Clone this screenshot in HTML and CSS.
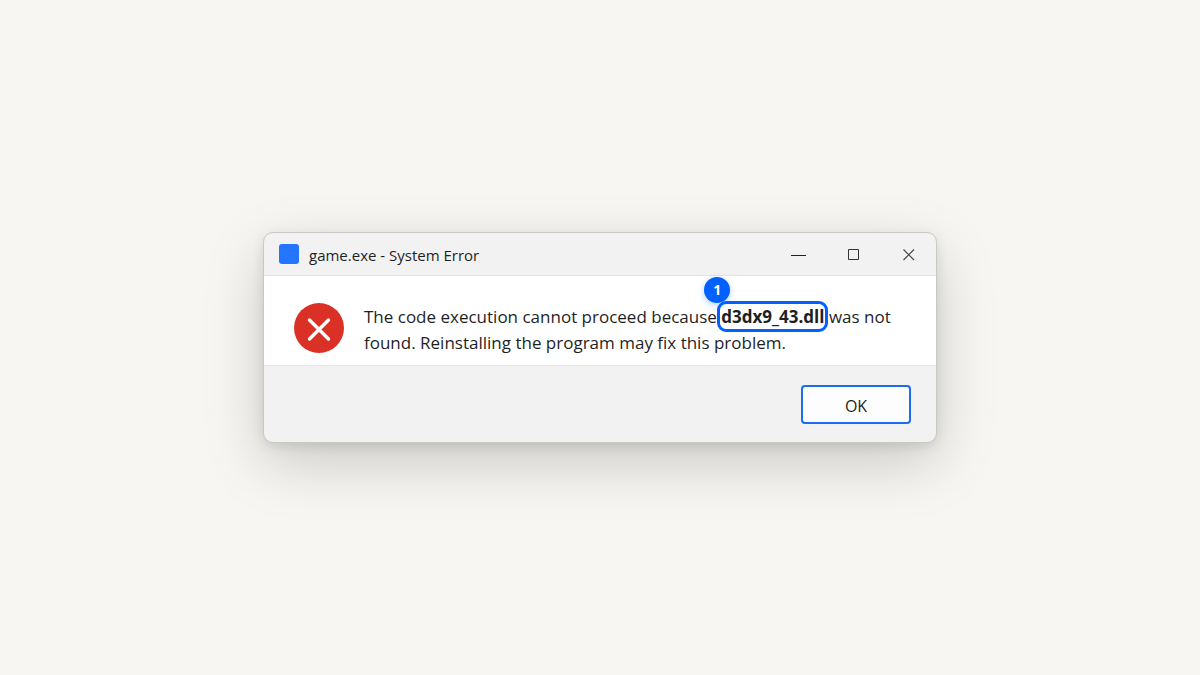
FILE: index.html
```html
<!DOCTYPE html>
<html lang="en">
<head>
<meta charset="utf-8">
<meta name="viewport" content="width=device-width, initial-scale=1">
<title>game.exe - System Error</title>
<link rel="stylesheet" href="styles.css">
</head>
<body>
<main class="dialog" role="alertdialog" aria-labelledby="title" aria-describedby="message">
  <header class="titlebar">
    <span class="app-icon"></span>
    <h1 class="title" id="title">game.exe - System Error</h1>
    <div class="controls">
      <button class="control" type="button" aria-label="Minimize">
        <svg width="16" height="16" viewBox="0 0 16 16"><path d="M0 9.5H15" stroke="#1f1f1f" fill="none"/></svg>
      </button>
      <button class="control" type="button" aria-label="Maximize">
        <svg width="16" height="16" viewBox="0 0 16 16"><path d="M2.5 3.5H12.5V13.5H2.5Z" stroke="#333" fill="none"/></svg>
      </button>
      <button class="control" type="button" aria-label="Close">
        <svg width="16" height="16" viewBox="0 0 16 16"><path d="M2.5 3.5L13 14M13 3.5L2.5 14" stroke="#444" stroke-width="1.1" fill="none"/></svg>
      </button>
    </div>
  </header>
  <section class="content">
    <svg class="error-icon" width="50" height="50" viewBox="0 0 50 50" aria-hidden="true">
      <circle cx="25" cy="25" r="25" fill="#da3025"/>
      <path d="M15.5 17L34.5 36M34.5 17L15.5 36" stroke="#fff" stroke-width="3.4" stroke-linecap="round" fill="none"/>
    </svg>
    <p class="message" id="message">The code execution cannot proceed because <strong class="file">d3dx9_43.dll<span class="badge">1</span></strong> was not<br>found. Reinstalling the program may fix this problem.</p>
  </section>
  <footer class="actions">
    <button class="ok" type="button">OK</button>
  </footer>
</main>
</body>
</html>
```
FILE: styles.css
```css
* {
  box-sizing: border-box;
}

body {
  margin: 0;
  min-height: 100vh;
  display: flex;
  align-items: center;
  justify-content: center;
  background: #f7f6f2;
  color: #1f1f1f;
  font-family: "Open Sans", sans-serif;
}

.dialog {
  width: 100%;
  max-width: 674px;
  border: 1px solid #c8c8c8;
  border-radius: 10px;
  background: #f2f2f2;
  box-shadow: 0 20px 60px rgba(0, 0, 0, 0.18), 0 4px 12px rgba(0, 0, 0, 0.1);
}

.titlebar {
  display: flex;
  align-items: center;
  gap: 10px;
  height: 43px;
  padding: 0 0 0 15px;
  border-bottom: 1px solid #e4e4e4;
}

.app-icon {
  width: 20px;
  height: 20px;
  border-radius: 3px;
  background: #2475ff;
}

.title {
  flex: 1;
  margin: 0;
  padding-top: 2px;
  font-size: 15px;
  font-weight: 400;
  line-height: 20px;
}

.controls {
  display: flex;
}

.control {
  display: grid;
  place-items: center;
  width: 55px;
  height: 42px;
  padding: 0;
  border: 0;
  background: transparent;
}

.content {
  display: flex;
  gap: 20px;
  padding: 27px 30px 9px;
  background: #fff;
}

.error-icon {
  flex: none;
}

.message {
  margin: 0;
  padding-top: 1px;
  font-size: 17px;
  line-height: 26px;
  white-space: nowrap;
}

.file {
  position: relative;
  border-radius: 5px;
  outline: 3px solid #0061ff;
  outline-offset: 1px;
}

.badge {
  position: absolute;
  left: -17px;
  top: -28px;
  width: 26px;
  height: 26px;
  border-radius: 50%;
  background: #0061ff;
  box-shadow: 0 2px 6px rgba(0, 97, 255, 0.3);
  color: #fff;
  font-size: 14px;
  text-align: center;
}

.actions {
  display: flex;
  justify-content: flex-end;
  padding: 19px 25px 18px;
  border-top: 1px solid #e4e4e4;
}

.ok {
  width: 110px;
  height: 39px;
  padding: 3px 0 0;
  border: 2px solid #1a6bf5;
  border-radius: 4px;
  background: #fdfdfd;
  color: #1f1f1f;
  font-family: inherit;
  font-size: 16px;
}
```
